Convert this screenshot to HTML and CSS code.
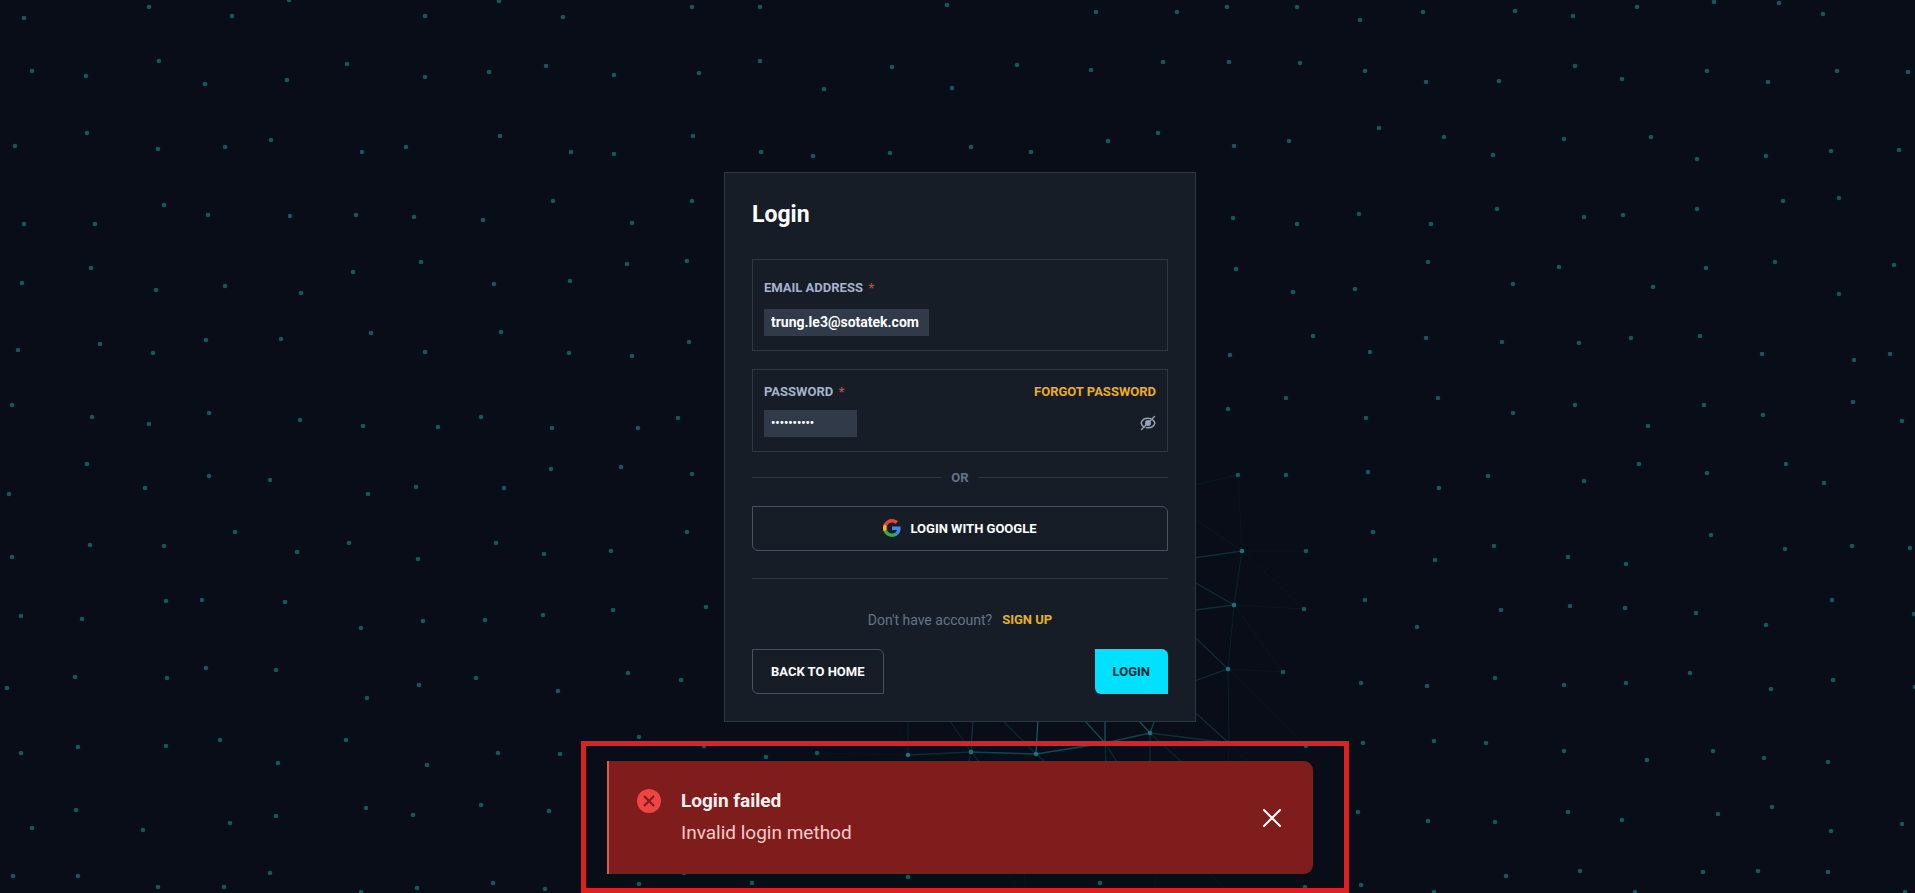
FILE: index.html
```html
<!DOCTYPE html>
<html lang="en">
<head>
    <meta charset="UTF-8">
    <meta name="viewport" content="width=device-width, initial-scale=1.0">
    <title>Login</title>
    <link rel="stylesheet" href="styles.css">
</head>
<body>
    <canvas class="particles" id="particles"></canvas>

    <main class="page">
        <form class="login-card">
            <h1 class="login-title">Login</h1>

            <div class="field field-email">
                <label class="field-label" for="email">EMAIL ADDRESS <span class="required">*</span></label>
                <input class="field-input email-input" type="email" id="email" value="trung.le3@sotatek.com">
            </div>

            <div class="field field-password">
                <div class="field-row">
                    <label class="field-label" for="password">PASSWORD <span class="required">*</span></label>
                    <a class="link" href="#">FORGOT PASSWORD</a>
                </div>
                <div class="field-row">
                    <input class="field-input password-input" type="password" id="password" value="0123456789">
                    <button class="icon-btn" type="button" id="togglePassword" aria-label="Show password">
                        <svg width="16" height="16" viewBox="0 0 16 16" fill="none" stroke="currentColor" stroke-width="1.4" stroke-linecap="round">
                            <path d="M4.2 12.1C2.600 11.200 1.400 9.600 1.100 8C1.900 5.200 4.600 3.200 8 3.200C9 3.200 9.900 3.400 10.700 3.700"/>
                            <path d="M12.600 4.800C13.800 5.600 14.600 6.800 14.900 8C14.100 10.800 11.400 12.800 8 12.800C7.400 12.800 6.800 12.700 6.300 12.600"/>
                            <circle cx="8" cy="8" r="2.300" fill="currentColor"/>
                            <path d="M1.500 14.500L14.500 1.500"/>
                        </svg>
                    </button>
                </div>
            </div>

            <div class="divider">OR</div>

            <button class="btn btn-outline" type="button">
                <svg width="18" height="18" viewBox="0 0 48 48">
                    <path fill="#EA4335" d="M24 9.500c3.540 0 6.710 1.220 9.210 3.600l6.850-6.850C35.900 2.380 30.470 0 24 0 14.620 0 6.510 5.380 2.560 13.220l7.980 6.190C12.430 13.720 17.740 9.500 24 9.500z"/>
                    <path fill="#4285F4" d="M46.980 24.550c0-1.570-.15-3.090-.38-4.550H24v9.020h12.940c-.58 2.960-2.260 5.480-4.780 7.180l7.730 6c4.510-4.180 7.090-10.360 7.090-17.650z"/>
                    <path fill="#FBBC05" d="M10.530 28.590c-.48-1.450-.76-2.990-.76-4.590s.27-3.140.76-4.590l-7.980-6.190C.92 16.460 0 20.120 0 24c0 3.880.92 7.540 2.560 10.780l7.970-6.190z"/>
                    <path fill="#34A853" d="M24 48c6.480 0 11.930-2.130 15.890-5.810l-7.730-6c-2.150 1.450-4.920 2.300-8.160 2.300-6.260 0-11.570-4.220-13.470-9.910l-7.980 6.190C6.510 42.620 14.620 48 24 48z"/>
                </svg>
                LOGIN WITH GOOGLE
            </button>

            <hr class="line">

            <p class="signup">Don't have account? <a class="link" href="#">SIGN UP</a></p>

            <div class="actions">
                <button class="btn btn-outline" type="button">BACK TO HOME</button>
                <button class="btn btn-primary" type="submit">LOGIN</button>
            </div>
        </form>
    </main>

    <div class="toast-area">
        <div class="toast-frame">
            <div class="toast" role="alert">
                <svg class="toast-icon" width="24" height="24" viewBox="0 0 24 24">
                    <circle cx="12" cy="12" r="12" fill="#ef4444"/>
                    <path d="M7 7L17 17M17 7L7 17" stroke="#7f1d1d" stroke-width="2"/>
                </svg>
                <div class="toast-body">
                    <div class="toast-title">Login failed</div>
                    <div class="toast-message">Invalid login method</div>
                </div>
                <button class="icon-btn toast-close" type="button" id="closeToast" aria-label="Close">
                    <svg width="18" height="18" viewBox="0 0 18 18" fill="none" stroke="currentColor" stroke-width="2" stroke-linecap="round">
                        <path d="M1 1L17 17M17 1L1 17"/>
                    </svg>
                </button>
            </div>
        </div>
    </div>

    <script>
        // Particle positions: x, y
        const points = [
            [24,18],[149,7],[232,16],[289,0],[425,16],[499,1],[563,17],[692,7],[760,7],[947,5],[1096,12],[1177,12],[1227,7],
            [32,71],[86,76],[159,61],[205,84],[287,80],[347,64],[425,77],[489,72],[546,66],[614,75],[699,73],[760,61],
            [824,89],[892,67],[952,88],[1017,65],[1091,70],[1163,62],[1229,62],
            [15,146],[87,133],[158,149],[225,147],[271,140],[362,152],[406,147],[500,136],[571,152],[614,154],[693,136],
            [761,152],[813,156],[890,153],[971,147],[1031,152],[1108,141],[1158,133],[1234,146],
            [24,224],[95,224],[164,205],[208,215],[290,216],[356,215],[414,217],[483,220],[553,201],[632,223],[692,201],[1233,218],
            [22,283],[91,268],[156,290],[225,286],[301,293],[353,272],[421,262],[494,284],[570,281],[627,264],[687,261],[1236,269],
            [18,350],[100,344],[153,353],[206,340],[281,339],[371,333],[425,352],[501,332],[569,353],[632,356],[689,342],[1230,355],
            [12,405],[92,417],[149,424],[209,413],[300,420],[363,426],[438,427],[481,417],[552,428],[638,428],[678,418],[1228,409],
            [9,494],[87,464],[145,488],[209,476],[270,480],[368,494],[416,487],[504,488],[551,469],[621,467],[692,474],[1238,475],
            [12,557],[90,545],[164,546],[235,532],[297,552],[349,543],[418,559],[496,543],[544,554],[611,551],[687,532],
            [21,616],[82,619],[166,601],[202,600],[285,602],[361,628],[423,621],[485,620],[543,615],[613,610],[706,607],
            [7,688],[75,677],[167,678],[206,668],[276,670],[367,698],[419,685],[476,678],[558,691],[628,673],[681,680],
            [21,753],[78,747],[166,746],[220,740],[278,763],[346,740],[427,765],[498,753],[560,754],[639,737],[704,746],
            [766,757],[817,753],
            [32,828],[76,810],[143,830],[230,823],[276,816],[366,808],[413,815],[481,805],[549,811],
            [13,876],[78,876],[158,887],[224,887],[270,873],[361,892],[417,888],[493,883],[545,889],[639,884],[684,873],
            [752,883],[908,877],[1100,883],
            [1297,7],[1360,20],[1423,12],[1515,11],[1573,16],[1637,7],[1714,2],[1779,3],[1823,14],
            [1300,63],[1365,71],[1426,82],[1499,81],[1575,66],[1622,79],[1707,71],[1768,82],[1837,71],[1908,72],
            [1289,141],[1379,128],[1444,137],[1493,155],[1564,139],[1651,137],[1697,159],[1766,156],[1831,151],[1899,150],
            [1297,224],[1359,214],[1431,224],[1497,209],[1584,217],[1623,215],[1697,209],[1783,201],[1839,198],
            [1293,292],[1355,289],[1428,262],[1513,284],[1559,267],[1653,287],[1706,268],[1775,262],[1839,294],[1894,265],
            [1313,336],[1370,352],[1426,338],[1502,342],[1579,343],[1631,338],[1700,336],[1762,354],[1854,360],[1890,354],
            [1286,398],[1366,418],[1438,398],[1513,413],[1575,405],[1648,426],[1704,405],[1763,415],[1853,402],[1902,421],
            [1286,475],[1368,472],[1439,488],[1488,476],[1584,481],[1639,464],[1707,473],[1786,464],[1824,483],
            [1306,551],[1373,532],[1435,560],[1494,546],[1568,557],[1626,564],[1711,535],[1785,549],[1852,546],[1910,548],
            [1304,609],[1365,600],[1417,627],[1501,610],[1570,606],[1625,608],[1696,613],[1766,625],[1832,600],[1914,614],
            [1283,672],[1361,683],[1427,686],[1495,678],[1564,685],[1626,683],[1690,673],[1771,689],[1833,680],[1915,687],
            [1306,746],[1363,743],[1434,741],[1486,743],[1564,751],[1647,760],[1713,751],[1764,758],[1828,762],
            [1358,812],[1428,821],[1495,822],[1568,812],[1622,820],[1718,814],[1772,807],[1831,831],[1902,824],
            [1305,887],[1361,885],[1434,892],[1506,876],[1580,871],[1635,892],[1703,872],[1758,871],[1828,872],[1905,892]
        ];

        // Brighter particles that the links join
        const activePoints = [
            [1242,551],[1234,605],[1228,669],[1229,743],[1150,733],[1105,743],[1036,754],[971,752],[908,755]
        ];

        // Links near the cursor: x1, y1, x2, y2, opacity
        const links = [
            [1180,560,1242,551,0.22],[1180,574,1234,605,0.22],[1180,612,1234,605,0.22],[1180,623,1228,669,0.22],
            [1180,686,1228,669,0.22],[1180,699,1229,743,0.22],[1242,551,1234,605,0.12],[1234,605,1228,669,0.1],
            [1228,669,1229,743,0.1],[1238,475,1242,551,0.04],[1190,486,1238,475,0.06],[1190,516,1242,551,0.05],
            [1242,551,1306,551,0.04],[1242,551,1304,609,0.04],[1234,605,1304,609,0.04],[1234,605,1283,672,0.04],
            [1228,669,1283,672,0.04],[1228,669,1306,746,0.04],[1229,743,1252,765,0.04],
            [974,700,971,752,0.25],[1039,700,1036,754,0.5],[1105,700,1105,743,0.45],[1066,700,1105,743,0.4],
            [1120,700,1150,733,0.45],[1162,700,1150,733,0.35],[1105,743,1150,733,0.35],[1150,733,1229,743,0.22],
            [1036,754,1105,743,0.4],[971,752,1036,754,0.35],[908,755,971,752,0.2],[982,700,1036,754,0.18],
            [908,700,908,755,0.12],[936,700,971,752,0.15],[817,753,908,755,0.03],[886,700,908,755,0.04],
            [1105,743,1106,765,0.2],[1105,743,1119,765,0.2],[1150,733,1150,765,0.2],[1150,733,1185,765,0.14],
            [1036,754,1048,765,0.16],[971,752,968,765,0.16],[971,752,982,765,0.16],[1229,743,1228,765,0.05],
            [1005,870,1020,893,0.04],[1024,870,1026,893,0.04],[1155,870,1156,893,0.04],[1206,870,1228,893,0.04]
        ];

        const canvas = document.getElementById('particles');
        const ctx = canvas.getContext('2d');

        function drawDots(list, color) {
            ctx.fillStyle = color;
            list.forEach(([x, y]) => {
                ctx.beginPath();
                ctx.arc(x, y, 2.300, 0, Math.PI * 2);
                ctx.fill();
            });
        }

        function drawParticles() {
            canvas.width = window.innerWidth;
            canvas.height = window.innerHeight;

            links.forEach(([x1, y1, x2, y2, opacity]) => {
                ctx.strokeStyle = `rgba(28, 170, 178, ${opacity})`;
                ctx.lineWidth = 1.3;
                ctx.beginPath();
                ctx.moveTo(x1, y1);
                ctx.lineTo(x2, y2);
                ctx.stroke();
            });

            drawDots(points, '#10595f');
            drawDots(activePoints, '#14757c');
        }

        drawParticles();
        window.addEventListener('resize', drawParticles);

        document.getElementById('togglePassword').addEventListener('click', function() {
            const input = document.getElementById('password');
            input.type = input.type === 'password' ? 'text' : 'password';
        });

        document.getElementById('closeToast').addEventListener('click', function() {
            document.querySelector('.toast-area').remove();
        });
    </script>
</body>
</html>
```
FILE: styles.css
```css
* {
    margin: 0;
    padding: 0;
    box-sizing: border-box;
    font-family: Roboto, 'Liberation Sans', sans-serif;
}

body {
    background-color: #080d17;
    color: white;
    font-size: 14px;
    line-height: 20px;
}

.particles {
    position: fixed;
    top: 0;
    left: 0;
}

.page {
    position: relative;
    display: flex;
    justify-content: center;
    align-items: center;
    min-height: 100vh;
    padding-left: 5px;
}

.login-card {
    display: flex;
    flex-direction: column;
    width: 100%;
    max-width: 472px;
    padding: 27px;
    background-color: #161d27;
    border: 1px solid #2d3845;
}

.login-title {
    margin-bottom: 29px;
    font-size: 23px;
    line-height: 30px;
}

.field {
    display: flex;
    flex-direction: column;
    padding: 12px 11px 14px;
    border: 1px solid #2d3845;
}

.field-email {
    gap: 11px;
    padding-top: 18px;
    margin-bottom: 18px;
}

.field-password {
    gap: 8px;
    margin-bottom: 16px;
}

.field-row {
    display: flex;
    justify-content: space-between;
    align-items: center;
}

.field-label {
    color: #a6b2cb;
    font-size: 13px;
    font-weight: bold;
}

.required {
    margin-left: 2px;
    color: #dc3b40;
}

.field-input {
    height: 27px;
    padding: 0 7px;
    background-color: #303a48;
    border: none;
    outline: none;
    color: white;
    font-size: 14px;
    font-weight: bold;
}

.email-input {
    width: 165px;
}

.password-input {
    width: 93px;
    font-size: 12px;
}

.link {
    color: #eab01c;
    font-size: 13px;
    font-weight: bold;
    text-decoration: none;
}

.icon-btn {
    display: flex;
    background: none;
    border: none;
    color: #94a3b8;
    cursor: pointer;
}

.divider {
    display: flex;
    align-items: center;
    gap: 10px;
    margin-bottom: 18px;
    color: #64748b;
    font-size: 13px;
    font-weight: bold;
}

.divider::before,
.divider::after {
    content: "";
    flex: 1;
    height: 1px;
    background-color: #2d3845;
}

.btn {
    display: flex;
    justify-content: center;
    align-items: center;
    gap: 9px;
    height: 45px;
    padding: 0 18px;
    border: none;
    border-radius: 0 6px 0 6px;
    font-size: 13px;
    font-weight: bold;
    cursor: pointer;
}

.btn-outline {
    background: none;
    border: 1px solid #465260;
    color: white;
}

.btn-primary {
    background-color: #00e1ff;
    color: #0c2b38;
}

.line {
    height: 1px;
    margin: 27px 0 31px;
    background-color: #2d3845;
    border: none;
}

.signup {
    display: flex;
    justify-content: center;
    gap: 10px;
    margin-bottom: 19px;
    color: #64748b;
}

.actions {
    display: flex;
    justify-content: space-between;
}

/* Error toast */
.toast-area {
    position: fixed;
    left: 15px;
    right: 0;
    bottom: 0;
    display: flex;
    justify-content: center;
}

.toast-frame {
    width: 100%;
    max-width: 768px;
    padding: 15px 31px 14px 21px;
    border: 5px solid #e01f20;
}

.toast {
    display: flex;
    align-items: center;
    gap: 20px;
    padding: 24px 32px 24px 28px;
    background-color: #7f1d1d;
    border-left: 2px solid #d85a5c;
    border-radius: 0 9px 9px 0;
}

.toast-icon {
    align-self: flex-start;
    margin-top: 4px;
}

.toast-body {
    flex: 1;
    padding-bottom: 1px;
    font-size: 19px;
    line-height: 32px;
}

.toast-title {
    color: #fef2f2;
    font-weight: bold;
}

.toast-message {
    color: #fecaca;
}

.toast-close {
    color: white;
}
```
